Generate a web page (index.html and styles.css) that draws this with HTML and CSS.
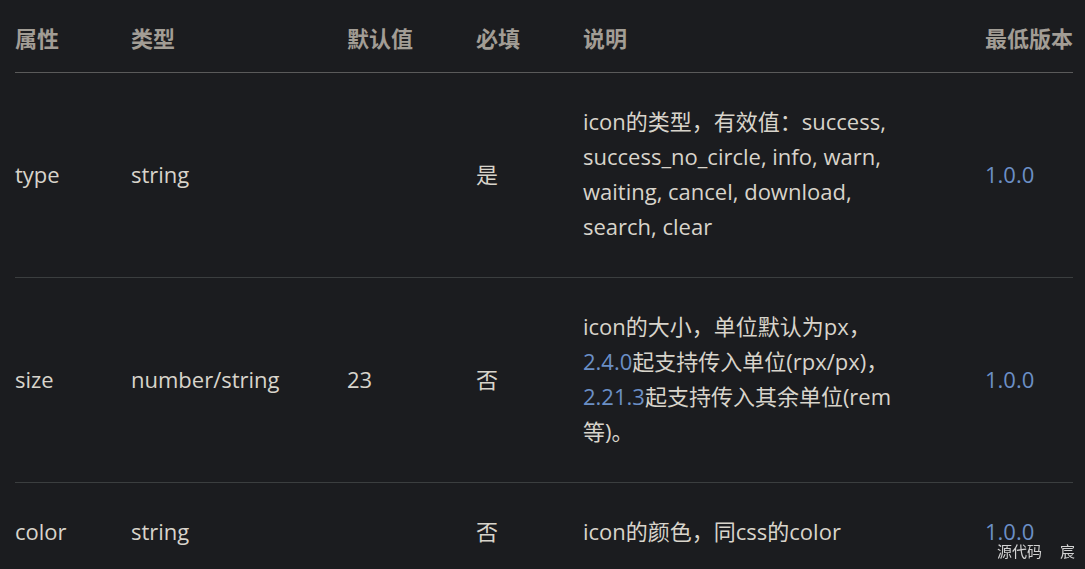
FILE: index.html
```html
<!DOCTYPE html>
<html lang="zh-CN">
<head>
  <meta charset="UTF-8" />
  <title>icon 属性</title>
  <meta name="viewport" content="width=device-width, initial-scale=1.0" />
  <link rel="stylesheet" href="styles.css">
</head>
<body>
  <table class="props">
    <colgroup>
      <col class="col-name" />
      <col class="col-type" />
      <col class="col-default" />
      <col class="col-required" />
      <col class="col-desc" />
      <col class="col-version" />
    </colgroup>
    <thead>
      <tr>
        <th>属性</th>
        <th>类型</th>
        <th>默认值</th>
        <th>必填</th>
        <th>说明</th>
        <th>最低版本</th>
      </tr>
    </thead>
    <tbody>
      <tr>
        <td>type</td>
        <td>string</td>
        <td></td>
        <td>是</td>
        <td class="desc">icon的类型，有效值：success, success_no_circle, info, warn, waiting, cancel, download, search, clear</td>
        <td><a href="#">1.0.0</a></td>
      </tr>
      <tr>
        <td>size</td>
        <td>number/string</td>
        <td>23</td>
        <td>否</td>
        <td class="desc">icon的大小，单位默认为px，<a href="#">2.4.0</a>起支持传入单位(rpx/px)，<a href="#">2.21.3</a>起支持传入其余单位(rem等)。</td>
        <td><a href="#">1.0.0</a></td>
      </tr>
      <tr>
        <td>color</td>
        <td>string</td>
        <td></td>
        <td>否</td>
        <td class="desc">icon的颜色，同css的color</td>
        <td><a href="#">1.0.0</a></td>
      </tr>
    </tbody>
  </table>

  <div class="source-tag">
    <span>源代码</span>
    <span>宸</span>
  </div>
</body>
</html>
```

FILE: styles.css
```css
* {
  box-sizing: border-box;
  margin: 0;
  padding: 0;
}

body {
  font-family: 'Open Sans', 'Noto Sans CJK SC', sans-serif;
  background: #1b1c1f;
  color: #d8d4cb;
  font-size: 22px;
  line-height: 35px;
  overflow: hidden;
}

.props {
  margin-left: 15px;
  width: 1058px;
  table-layout: fixed;
  border-collapse: collapse;
}

.col-name { width: 116px; }
.col-type { width: 216px; }
.col-default { width: 129px; }
.col-required { width: 107px; }
.col-desc { width: 402px; }
.col-version { width: 88px; }

th {
  text-align: left;
  font-weight: bold;
  color: #a29d95;
  padding: 21px 0 16px;
  border-bottom: 1px solid #5a5a5a;
  white-space: nowrap;
}

td {
  padding: 31px 0 33px;
  vertical-align: middle;
  border-bottom: 1px solid #3b3e3f;
}

td.desc {
  padding-right: 80px;
}

a {
  color: #6b8fc6;
  text-decoration: none;
}

.source-tag {
  position: fixed;
  right: 10px;
  bottom: 8px;
  display: flex;
  gap: 18px;
  font-size: 15px;
  line-height: 20px;
  color: #d2d2d2;
}
```
